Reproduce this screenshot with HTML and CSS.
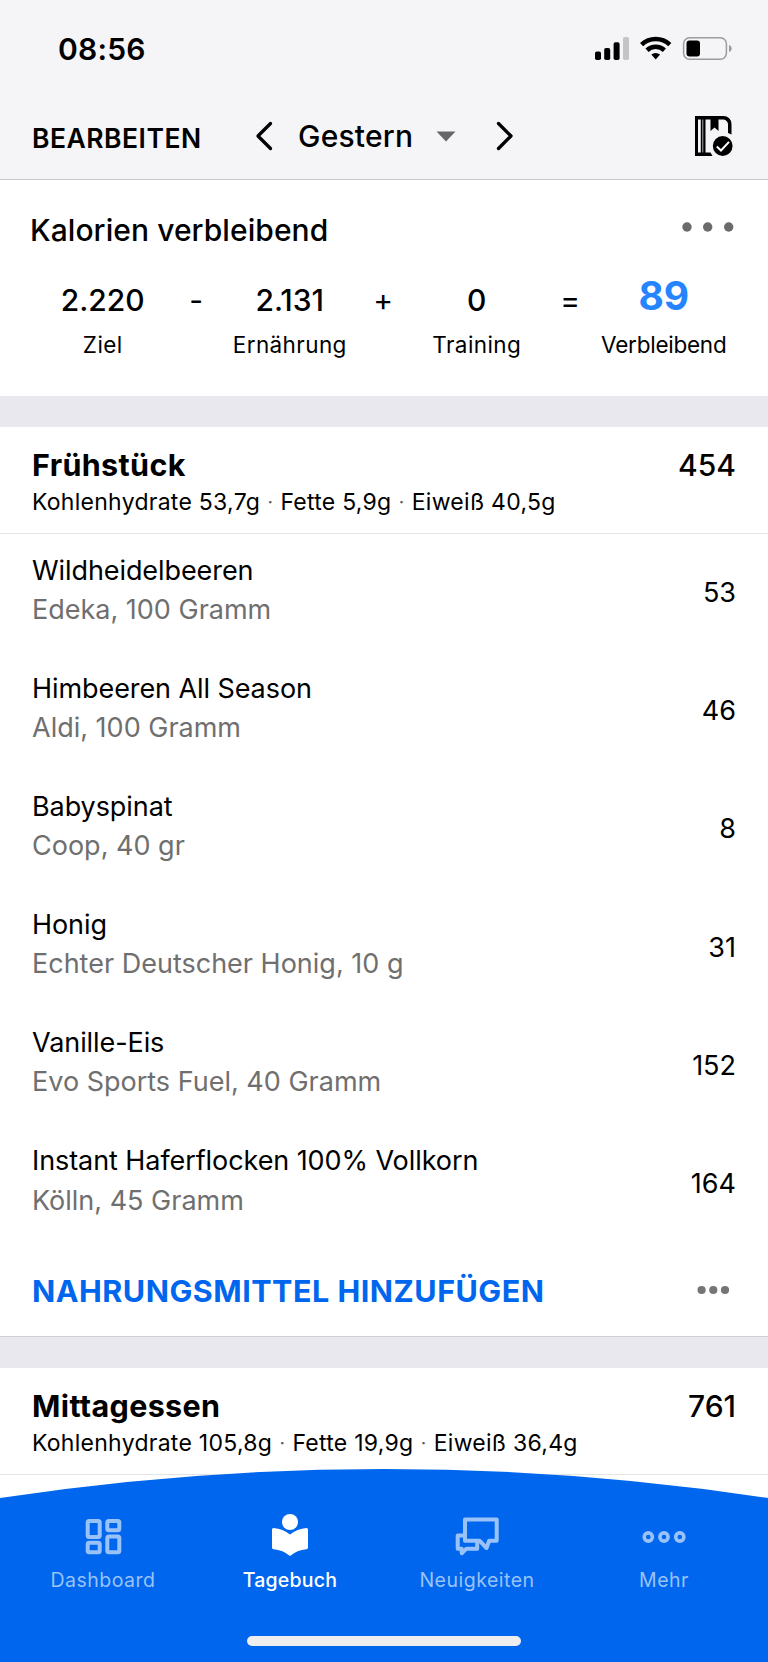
FILE: index.html
```html
<!DOCTYPE html>
<html lang="de">
<head>
  <meta charset="UTF-8">
  <title>Tagebuch</title>
  <link rel="stylesheet" href="styles.css">
</head>
<body>

  <header class="header">
    <div class="statusbar">
      <span class="clock">08:56</span>
      <svg class="status-icons" width="140" height="28" viewBox="594 34 140 28">
        <rect x="595" y="51.5" width="6" height="8.5" rx="1.8"/>
        <rect x="604.2" y="48" width="6" height="12" rx="1.8"/>
        <rect x="613.6" y="42.3" width="6" height="17.7" rx="1.8"/>
        <rect x="623" y="37" width="6" height="23" rx="1.8" fill="#c4c4c6"/>
        <g fill="none" stroke="#000" stroke-width="4.6">
          <path d="M641.6 44.6a20.5 20.5 0 0 1 28.2 0"/>
          <path d="M647 50.2a12.8 12.8 0 0 1 17.4 0"/>
        </g>
        <path d="M651.3 54.6a6.5 6.5 0 0 1 8.8 0l-4.4 5z"/>
        <rect x="683.6" y="37.7" width="42.8" height="21.6" rx="6" fill="none" stroke="#9c9c9f" stroke-width="1.5"/>
        <rect x="686.5" y="40.6" width="13.5" height="15.8" rx="3"/>
        <path d="M729 45c3.6 1 3.6 6 0 7z" fill="#9c9c9f"/>
      </svg>
    </div>
    <div class="toolbar">
      <span class="edit">BEARBEITEN</span>
      <svg class="prev" width="18" height="30" viewBox="0 0 18 30"><path d="M15.5 2.5L3 15l12.5 12.5"/></svg>
      <span class="day">Gestern</span>
      <svg class="caret" width="20" height="11" viewBox="0 0 20 11"><path d="M.5.5h19L10 10.5z"/></svg>
      <svg class="next" width="18" height="30" viewBox="0 0 18 30"><path d="M2.5 2.5L15 15 2.5 27.5"/></svg>
      <svg class="complete" width="38" height="41" viewBox="0 0 38 41">
        <path d="M0 0h28.5a8 8 0 0 1 8 8v10.5l-3.5-1.5v-8.5a5 5 0 0 0-5-5h-4.500V15l-4-3.5-4 3.5V3.5H10.5v33h5l2 3.500H0zM3 3.5v33h2.800v-33zM7.500 3.500v33h.7v-33z" fill-rule="evenodd"/>
        <circle cx="27.7" cy="30" r="9.9"/>
        <path class="tick" d="M21.8 30.5l4.2 4 8-8.6"/>
      </svg>
    </div>
  </header>

  <section class="summary">
    <div class="summary-head">
      <h1>Kalorien verbleibend</h1>
      <svg width="52" height="10" viewBox="0 0 52 10" fill="#6b6b6b"><circle cx="5" cy="5" r="4.7"/><circle cx="25.7" cy="5" r="4.7"/><circle cx="46.7" cy="5" r="4.7"/></svg>
    </div>
    <div class="equation">
      <div class="term"><b>2.220</b><span>Ziel</span></div>
      <div class="term"><b class="op">-</b></div>
      <div class="term"><b>2.131</b><span>Ernährung</span></div>
      <div class="term"><b class="op">+</b></div>
      <div class="term"><b>0</b><span>Training</span></div>
      <div class="term"><b class="op">=</b></div>
      <div class="term left"><b>89</b><span>Verbleibend</span></div>
    </div>
  </section>

  <section class="meal">
    <div class="meal-head">
      <div>
        <h2>Frühstück</h2>
        <p class="macros">Kohlenhydrate 53,7g <i>·</i> Fette 5,9g <i>·</i> Eiweiß 40,5g</p>
      </div>
      <span class="total">454</span>
    </div>
    <ul class="foods">
      <li><div><p>Wildheidelbeeren</p><p class="brand">Edeka, 100 Gramm</p></div><span>53</span></li>
      <li><div><p>Himbeeren All Season</p><p class="brand">Aldi, 100 Gramm</p></div><span>46</span></li>
      <li><div><p>Babyspinat</p><p class="brand">Coop, 40 gr</p></div><span>8</span></li>
      <li><div><p>Honig</p><p class="brand">Echter Deutscher Honig, 10 g</p></div><span>31</span></li>
      <li><div><p>Vanille-Eis</p><p class="brand">Evo Sports Fuel, 40 Gramm</p></div><span>152</span></li>
      <li><div><p>Instant Haferflocken 100% Vollkorn</p><p class="brand">Kölln, 45 Gramm</p></div><span>164</span></li>
    </ul>
    <div class="add">
      <span>NAHRUNGSMITTEL HINZUFÜGEN</span>
      <svg width="34" height="10" viewBox="0 0 34 10" fill="#757575"><circle cx="4.6" cy="5" r="4.1"/><circle cx="16.3" cy="5" r="4.1"/><circle cx="28" cy="5" r="4.1"/></svg>
    </div>
  </section>

  <section class="meal">
    <div class="meal-head">
      <div>
        <h2>Mittagessen</h2>
        <p class="macros">Kohlenhydrate 105,8g <i>·</i> Fette 19,9g <i>·</i> Eiweiß 36,4g</p>
      </div>
      <span class="total">761</span>
    </div>
  </section>

  <nav class="tabbar">
    <svg class="curve" width="768" height="193" viewBox="0 0 768 193"><path d="M0 29Q384-29 768 29V193H0z"/></svg>
    <div class="tabs">
      <div class="tab">
        <svg width="46" height="46" viewBox="80 1512 46 46" fill="none" stroke="currentColor" stroke-width="4">
          <rect x="87.7" y="1521" width="12" height="16" rx="1.5"/>
          <rect x="107.3" y="1521" width="12" height="9.2" rx="1.5"/>
          <rect x="87.7" y="1542.7" width="12" height="9.6" rx="1.5"/>
          <rect x="107.3" y="1536.5" width="12" height="15.8" rx="1.5"/>
        </svg>
        <span>Dashboard</span>
      </div>
      <div class="tab active">
        <svg width="46" height="46" viewBox="267 1512 46 46" fill="currentColor">
          <circle cx="290" cy="1522" r="8"/>
          <path d="M290 1534.5q-7-5.8-16.5-6.5-1.5 0-1.5 1.5v18q0 1.5 1.5 1.7 9.5.8 16.5 6.800 7-6 16.500-6.800 1.500-.2 1.500-1.700v-18q0-1.500-1.500-1.500-9.500.7-16.500 6.500z"/>
        </svg>
        <span>Tagebuch</span>
      </div>
      <div class="tab">
        <svg width="46" height="46" viewBox="454 1512 46 46" fill="none" stroke="currentColor" stroke-width="4" stroke-linejoin="round">
          <path d="M465 1519.5h31.7v21.2h-7.5l-2.7 7.3-7-7.3H465z"/>
          <path d="M464 1535.5h-6.3v13.3h4v4.5l4.5-4.500h11v-7"/>
        </svg>
        <span>Neuigkeiten</span>
      </div>
      <div class="tab">
        <svg width="46" height="46" viewBox="641 1512 46 46" fill="none" stroke="currentColor" stroke-width="3.6">
          <circle cx="648.3" cy="1537" r="4.1"/><circle cx="664" cy="1537" r="4.1"/><circle cx="679.8" cy="1537" r="4.1"/>
        </svg>
        <span>Mehr</span>
      </div>
    </div>
    <div class="home"></div>
  </nav>

</body>
</html>
```
FILE: styles.css
```css
* {
  box-sizing: border-box;
}
body {
  margin: 0;
  width: 768px;
  height: 1662px;
  overflow: hidden;
  position: relative;
  background: #fff;
  color: #000;
  font-family: Inter, "Liberation Sans", sans-serif;
}
h1, h2, p, ul {
  margin: 0;
  padding: 0;
  white-space: nowrap;
}
svg {
  display: block;
  flex: none;
}

/* status bar and date picker */
.header {
  height: 180px;
  background: #f5f5f8;
  border-bottom: 1px solid #c8c8cc;
}
.statusbar {
  display: flex;
  justify-content: space-between;
  padding: 34px 34px 0 58px;
}
.clock {
  font-size: 30px;
  font-weight: 600;
  line-height: 30px;
  letter-spacing: .2px;
}
.toolbar {
  display: flex;
  align-items: center;
  height: 56px;
  margin-top: 44px;
  padding-left: 32px;
}
.edit {
  width: 223px;
  font-size: 26.5px;
  font-weight: 600;
  line-height: 56px;
  letter-spacing: .5px;
  padding-top: 3px;
}
.day {
  width: 138px;
  margin-left: 25px;
  font-size: 30px;
  font-weight: 500;
  letter-spacing: .2px;
}
.prev, .next {
  fill: none;
  stroke: #000;
  stroke-width: 3.3;
  stroke-linecap: round;
  stroke-linejoin: round;
}
.caret {
  fill: #666;
}
.next {
  margin-left: 40px;
}
.complete {
  margin-left: 181px;
}
.complete .tick {
  fill: none;
  stroke: #fff;
  stroke-width: 2;
}

.summary {
  height: 216px;
  padding-top: 32px;
}
.summary-head {
  display: flex;
  justify-content: space-between;
  padding: 0 34px 0 30px;
}
.summary-head svg {
  margin-top: 10px;
}
h1 {
  font-size: 30px;
  font-weight: 500;
  line-height: 36px;
  letter-spacing: .07px;
}
.equation {
  display: grid;
  grid-template-columns: repeat(7, 93.5px);
  padding: 34px 0 0 56px;
}
.term {
  display: flex;
  flex-direction: column;
  align-items: center;
  white-space: nowrap;
}
.term b {
  font-size: 30px;
  font-weight: 500;
  line-height: 36px;
}
.term span {
  margin-top: 13px;
  font-size: 22.5px;
  line-height: 28px;
  letter-spacing: .4px;
}
.term .op {
  font-weight: 400;
}
.term.left b {
  color: #2684ff;
  font-size: 39px;
  font-weight: 700;
  line-height: 27px;
  padding-bottom: 9px;
}
.term.left span {
  letter-spacing: -.25px;
}

/* meals */
.meal {
  border-top: 31px solid #e9e8ee;
}
.meal-head {
  display: flex;
  justify-content: space-between;
  height: 107px;
  padding: 20px 32px 0 32px;
  border-bottom: 1px solid #e4e4e4;
}
h2 {
  font-size: 30.5px;
  font-weight: 700;
  line-height: 36px;
  letter-spacing: .35px;
}
.macros {
  margin-top: 5px;
  font-size: 23px;
  line-height: 28px;
  letter-spacing: .27px;
}
.macros i {
  font-style: normal;
  font-weight: 300;
  color: #555;
}
.total {
  font-size: 30px;
  font-weight: 500;
  line-height: 36px;
}
.foods {
  list-style: none;
}
.foods li {
  display: flex;
  justify-content: space-between;
  align-items: center;
  height: 118.1px;
  font-size: 27px;
  line-height: 39.5px;
  padding: 0 32px;
}
.foods div {
  padding-bottom: 6px;
  letter-spacing: -.08px;
}
.foods .brand {
  color: #6f6f6f;
  letter-spacing: 0;
}
.add {
  display: flex;
  justify-content: space-between;
  align-items: center;
  height: 94px;
  padding: 2px 37px 0 32px;
  border-bottom: 1px solid #d0d0d3;
  color: #0066ee;
  font-size: 30.5px;
  font-weight: 700;
  letter-spacing: .5px;
}

/* bottom tabs, laid over the scrolling diary */
.tabbar {
  position: absolute;
  left: 0;
  bottom: 0;
  width: 768px;
  height: 193px;
}
.curve {
  position: absolute;
  fill: #0066ee;
}
.tabs {
  position: relative;
  display: grid;
  grid-template-columns: repeat(4, 187px);
  padding: 43px 0 0 9.5px;
}
.tab {
  display: flex;
  flex-direction: column;
  align-items: center;
  color: #99c2f8;
  font-size: 19.5px;
}
.tab span {
  margin-top: 10px;
  line-height: 24px;
  letter-spacing: .5px;
}
.tab.active {
  color: #fff;
  font-weight: 500;
}
.tab.active span {
  letter-spacing: .25px;
}
.home {
  position: relative;
  width: 274px;
  height: 10px;
  margin: 44px auto 0;
  border-radius: 5px;
  background: #eee;
}
```
